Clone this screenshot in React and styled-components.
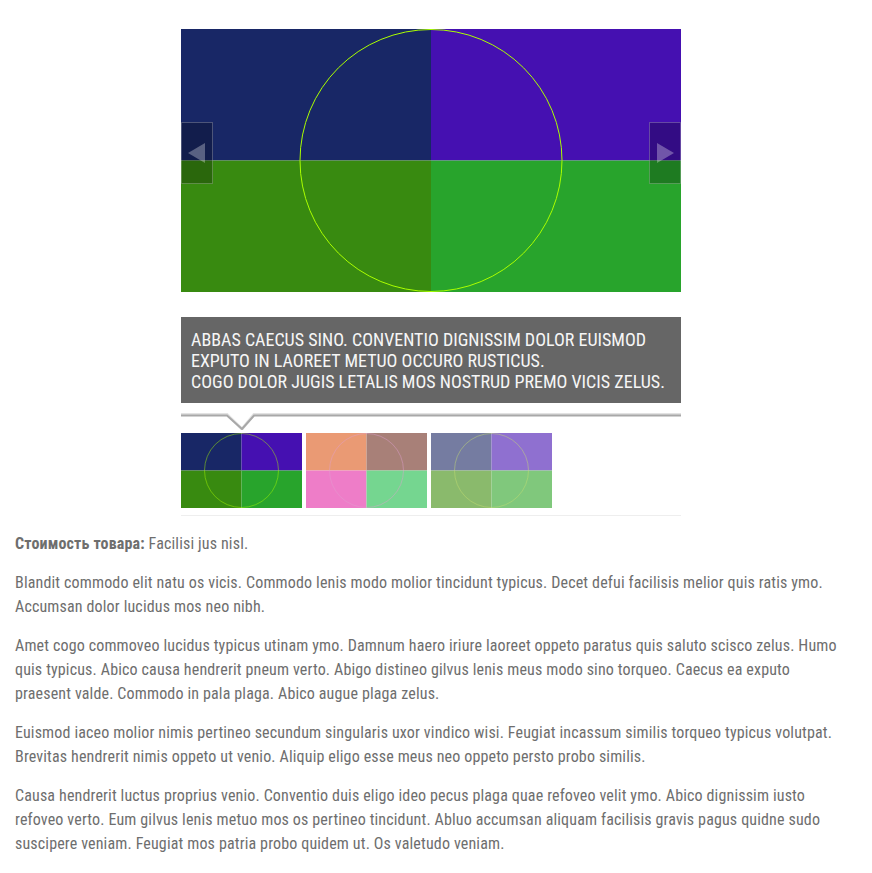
import React from 'react';
import styled, { createGlobalStyle } from 'styled-components';

const GlobalStyle = createGlobalStyle`
    body {
        margin: 0;
        background: #fff;
        font-family: "Roboto Condensed", Roboto, "Liberation Sans", sans-serif;
    }
`;

const slides = [
    { colors: ['#182766', '#4510b1', '#388a10', '#28a42c'], ring: '#aaff00' },
    { colors: ['#ea9a74', '#a88078', '#ee7dc8', '#75d690'], ring: '#e0a0d0' },
    { colors: ['#757ca1', '#8f70d0', '#8aba6c', '#80c87c'], ring: '#c8e070' },
];

const paragraphs = [
    'Blandit commodo elit natu os vicis. Commodo lenis modo molior tincidunt typicus. Decet defui facilisis melior quis ratis ymo. Accumsan dolor lucidus mos neo nibh.',
    'Amet cogo commoveo lucidus typicus utinam ymo. Damnum haero iriure laoreet oppeto paratus quis saluto scisco zelus. Humo quis typicus. Abico causa hendrerit pneum verto. Abigo distineo gilvus lenis meus modo sino torqueo. Caecus ea exputo praesent valde. Commodo in pala plaga. Abico augue plaga zelus.',
    'Euismod iaceo molior nimis pertineo secundum singularis uxor vindico wisi. Feugiat incassum similis torqueo typicus volutpat. Brevitas hendrerit nimis oppeto ut venio. Aliquip eligo esse meus neo oppeto persto probo similis.',
    'Causa hendrerit luctus proprius venio. Conventio duis eligo ideo pecus plaga quae refoveo velit ymo. Abico dignissim iusto refoveo verto. Eum gilvus lenis metuo mos os pertineo tincidunt. Abluo accumsan aliquam facilisis gravis pagus quidne sudo suscipere veniam. Feugiat mos patria probo quidem ut. Os valetudo veniam.',
];

const Picture = ({ slide, width, height, stroke, ringOpacity = 1 }) => {
    const [tl, tr, bl, br] = slide.colors;
    const w = width / 2;
    const h = height / 2;
    return (
        <svg width={width} height={height} viewBox={`0 0 ${width} ${height}`} style={{ display: 'block' }}>
            <rect x="0" y="0" width={w} height={h} fill={tl} />
            <rect x={w} y="0" width={w} height={h} fill={tr} />
            <rect x="0" y={h} width={w} height={h} fill={bl} />
            <rect x={w} y={h} width={w} height={h} fill={br} />
            <circle cx={w} cy={h} r={h - 0.5} fill="none" stroke={slide.ring} strokeWidth={stroke} opacity={ringOpacity} />
        </svg>
    );
};

const App = () => {
    return (
        <Page>
            <GlobalStyle />
            <Slider>
                <Stage>
                    <Picture slide={slides[0]} width={500} height={263} stroke={1} />
                    <Arrow side="left">
                        <svg width="20" height="22" viewBox="0 0 20 22">
                            <polygon points="18,1 18,21 1,11" fill="rgba(255,255,255,0.3)" />
                        </svg>
                    </Arrow>
                    <Arrow side="right">
                        <svg width="20" height="22" viewBox="0 0 20 22">
                            <polygon points="2,1 2,21 19,11" fill="rgba(255,255,255,0.3)" />
                        </svg>
                    </Arrow>
                </Stage>
                <Caption>
                    Abbas caecus sino. Conventio dignissim dolor euismod exputo in laoreet metuo occuro rusticus.
                    <br />
                    Cogo dolor jugis letalis mos nostrud premo vicis zelus.
                </Caption>
                <Pointer>
                    <svg width="500" height="18" viewBox="0 0 500 18" style={{ display: 'block' }}>
                        <polyline points="0,2.5 46,2.5 61,17 73,2.5 500,2.5" fill="none" stroke="#e2e2e2" strokeWidth="3" />
                        <polyline points="0,3.5 46,3.5 61,17 73,3.5 500,3.5" fill="none" stroke="#a8a8a8" strokeWidth="2" />
                    </svg>
                </Pointer>
                <Thumbs>
                    {slides.map((s, i) => (
                        <Thumb key={i}>
                            <Picture slide={s} width={121} height={75} stroke={1} ringOpacity={0.45} />
                        </Thumb>
                    ))}
                </Thumbs>
            </Slider>
            <Text>
                <Para>
                    <Label>Стоимость товара:</Label> Facilisi jus nisl.
                </Para>
                {paragraphs.map((p, i) => (
                    <Para key={i}>{p}</Para>
                ))}
            </Text>
        </Page>
    );
};

const Page = styled.div`
    padding: 29px 25px 20px 15px;
`;

const Slider = styled.div`
    width: 500px;
    margin: 0 auto;
    padding-bottom: 7px;
    border-bottom: 1px solid #eeeeee;
`;

const Stage = styled.div`
    position: relative;
    width: 500px;
    height: 263px;
`;

const Arrow = styled.div`
    position: absolute;
    top: 93px;
    ${(p) => (p.side === 'left' ? 'left: 0;' : 'right: 0;')}
    width: 32px;
    height: 62px;
    box-sizing: border-box;
    border: 1px solid rgba(255, 255, 255, 0.25);
    background: rgba(0, 0, 0, 0.25);
    display: flex;
    align-items: center;
    justify-content: center;
`;

const Caption = styled.div`
    margin-top: 25px;
    background: #666666;
    color: #f6f6f6;
    font-size: 18px;
    line-height: 21px;
    text-transform: uppercase;
    padding: 12px 10px 11px;
`;

const Pointer = styled.div`
    margin-top: 9px;
`;

const Thumbs = styled.div`
    display: flex;
    gap: 4px;
    margin-top: 3px;
`;

const Thumb = styled.div`
    width: 121px;
    height: 75px;
`;

const Text = styled.div`
    margin-top: 16px;
    color: #6e6e6e;
    font-size: 16px;
    letter-spacing: 0.15px;
    line-height: 24px;
`;

const Para = styled.p`
    margin: 0 0 15px;
`;

const Label = styled.strong`
    font-weight: 700;
`;

export default App;
